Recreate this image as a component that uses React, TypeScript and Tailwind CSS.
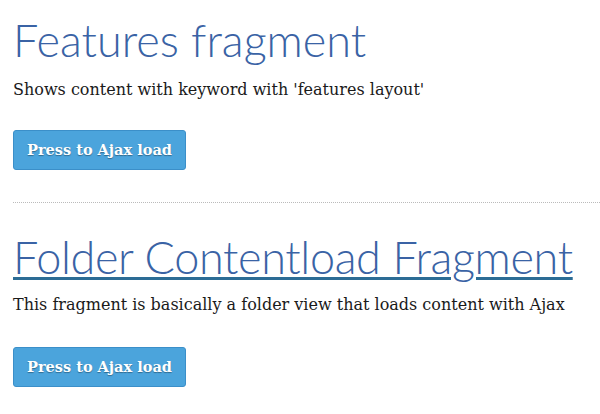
import React from "react";

const AjaxButton = () => (
  <button
    type="button"
    className="h-[40px] w-[173px] rounded-[3px] border border-[#3b8fc9] bg-[#4ba4dc] text-[14.5px] font-bold text-white [font-family:'DejaVu_Serif',serif] [text-shadow:0_1px_1px_rgba(0,0,0,0.35)]"
  >
    Press to Ajax load
  </button>
);

const Fragment = ({
  title,
  text,
  linked,
}: {
  title: string;
  text: string;
  linked?: boolean;
}) => (
  <section className="flex flex-col items-start">
    <h1 className="whitespace-nowrap text-[45px] leading-[56px] font-light text-[#3a63a5] [font-family:'Lato',sans-serif]">
      {linked ? (
        <a
          href="#"
          className="tracking-[-0.35px] underline decoration-[#2c6c95] decoration-[3px] underline-offset-[3px]"
        >
          {title}
        </a>
      ) : (
        title
      )}
    </h1>
    <p
      className={
        linked
          ? "mt-[8px] text-[16px] leading-[24px] text-[#1a1a1a] [font-family:'DejaVu_Serif',serif]"
          : "mt-[10px] text-[16px] leading-[24px] text-[#1a1a1a] [font-family:'DejaVu_Serif',serif]"
      }
    >
      {text}
    </p>
    <div className={linked ? "mt-[30px]" : "mt-[28px]"}>
      <AjaxButton />
    </div>
  </section>
);

export default function App() {
  return (
    <div className="min-h-[414px] w-[600px] bg-white pl-[13px] pt-[12px]">
      <Fragment
        title="Features fragment"
        text="Shows content with keyword with 'features layout'"
      />
      <div className="mt-[32px] mb-[26px] border-t border-dotted border-[#bbbbbb]" />
      <Fragment
        title="Folder Contentload Fragment"
        text="This fragment is basically a folder view that loads content with Ajax"
        linked
      />
    </div>
  );
}
